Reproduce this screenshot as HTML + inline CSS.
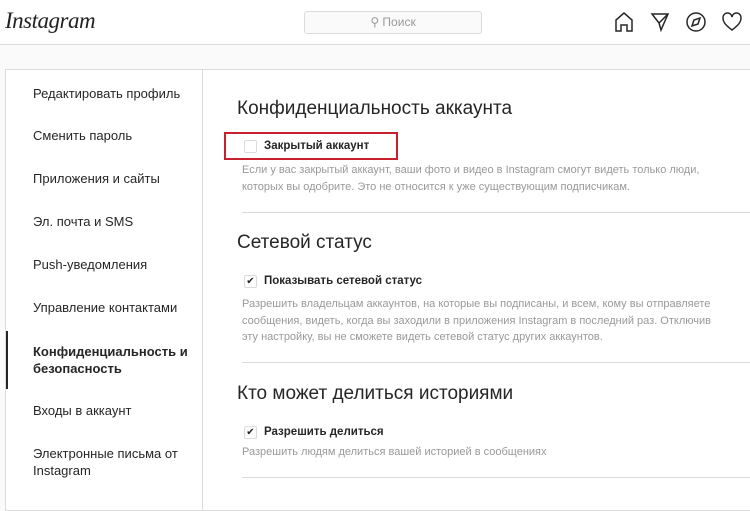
<!DOCTYPE html><html><head><meta charset="utf-8"><style>
body{margin:0;width:750px;height:500px;overflow:hidden;background:#fafafa;font-family:"Liberation Sans","DejaVu Sans",sans-serif;position:relative}
.hdr{position:absolute;left:0;top:0;width:750px;height:44px;background:#fff;border-bottom:1px solid #dbdbdb}
.logo{position:absolute;left:5px;top:8px;font-family:"Liberation Serif",serif;font-style:italic;font-size:23px;color:#222;letter-spacing:-.5px}
.search{position:absolute;left:304px;top:11px;width:176px;height:21px;border:1px solid #dbdbdb;background:#fafafa;border-radius:3px;font-size:12px;color:#999;text-align:center;line-height:21px}
.panel{position:absolute;left:5px;top:69px;width:760px;height:440px;background:#fff;border:1px solid #dbdbdb}
.side{position:absolute;left:0;top:0;width:196px;height:440px;border-right:1px solid #dbdbdb}
.it{position:absolute;left:27px;font-size:13px;color:#262626;line-height:17px}
.act{position:absolute;left:0;top:261px;width:2px;height:58px;background:#262626}
h2{position:absolute;left:237px;margin:0;font-weight:normal;font-size:19px;color:#262626}
.lbl{position:absolute;left:264px;font-size:11.5px;font-weight:bold;color:#262626}
.cb{position:absolute;left:244px;width:11px;height:11px;border:1px solid #dbdbdb;border-radius:2px;font-size:10px;line-height:11px;text-align:center;color:#262626}
.d{position:absolute;left:242px;font-size:11px;color:#999;line-height:16.5px;white-space:nowrap}
.hr{position:absolute;left:242px;width:510px;height:1px;background:#dbdbdb}
</style></head><body>
<div class="hdr"><div class="logo">Instagram</div><div class="search">⚲ Поиск</div>
<svg style="position:absolute;left:612px;top:10px" width="130" height="24" fill="none" stroke="#262626" stroke-width="1.5">
<path d="M4 21V10l8-7 8 7v11h-5v-6h-6v6z"/>
<path d="M40 4l16 0-7 16-2-7z M47 13l9-9"/>
<circle cx="84" cy="12" r="9"/><path d="M80 16l2-6 6-2-2 6z"/>
<path d="M120 20c-8-6-9-9-9-12a4 4 0 0 1 9-1a4 4 0 0 1 9 1c0 3-1 6-9 12z"/>
</svg></div>
<div class="panel"><div class="side">
<div class="it" style="top:15px">Редактировать профиль</div>
<div class="it" style="top:57px">Сменить пароль</div>
<div class="it" style="top:100px">Приложения и сайты</div>
<div class="it" style="top:143px">Эл. почта и SMS</div>
<div class="it" style="top:186px">Push-уведомления</div>
<div class="it" style="top:229px">Управление контактами</div>
<div class="it" style="top:273px;font-weight:bold">Конфиденциальность и<br>безопасность</div>
<div class="act"></div>
<div class="it" style="top:332px">Входы в аккаунт</div>
<div class="it" style="top:375px">Электронные письма от<br>Instagram</div>
</div></div>
<h2 style="top:98px">Конфиденциальность аккаунта</h2>
<div style="position:absolute;left:224px;top:132px;width:170px;height:24px;border:2.5px solid #c8202e"></div>
<div class="cb" style="top:140px"></div><div class="lbl" style="top:140px">Закрытый аккаунт</div>
<div class="d" style="top:162px">Если у вас закрытый аккаунт, ваши фото и видео в Instagram смогут видеть только люди,<br>которых вы одобрите. Это не относится к уже существующим подписчикам.</div>
<div class="hr" style="top:212px"></div>
<h2 style="top:232px">Сетевой статус</h2>
<div class="cb" style="top:275px">✔</div><div class="lbl" style="top:275px">Показывать сетевой статус</div>
<div class="d" style="top:296px">Разрешить владельцам аккаунтов, на которые вы подписаны, и всем, кому вы отправляете<br>сообщения, видеть, когда вы заходили в приложения Instagram в последний раз. Отключив<br>эту настройку, вы не сможете видеть сетевой статус других аккаунтов.</div>
<div class="hr" style="top:362px"></div>
<h2 style="top:383px">Кто может делиться историями</h2>
<div class="cb" style="top:426px">✔</div><div class="lbl" style="top:426px">Разрешить делиться</div>
<div class="d" style="top:444px">Разрешить людям делиться вашей историей в сообщениях</div>
<div class="hr" style="top:477px"></div>
</body></html>
